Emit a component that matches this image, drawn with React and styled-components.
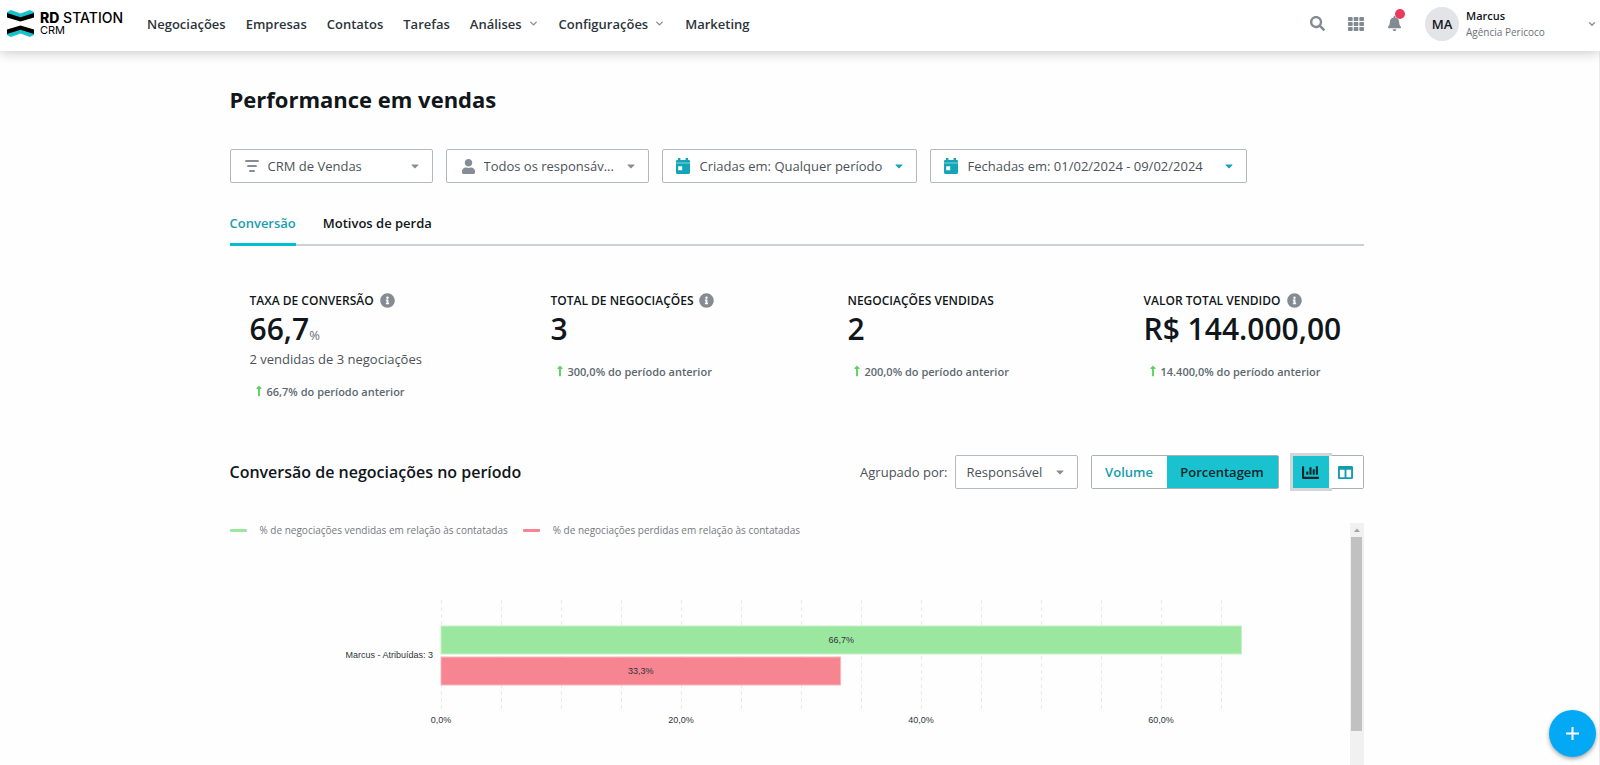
import React from "react";
import styled, { createGlobalStyle } from "styled-components";
import {
  FaSearch,
  FaTh,
  FaBell,
  FaUser,
  FaCaretDown,
  FaInfoCircle,
  FaLongArrowAltUp,
  FaChartBar,
  FaColumns,
} from "react-icons/fa";
import { FiChevronDown } from "react-icons/fi";

const GlobalStyle = createGlobalStyle`
  *, *::before, *::after { box-sizing: border-box; }
  body {
    margin: 0;
    background: #fefefe;
    color: #10161a;
    font-family: "Open Sans", "Noto Sans", sans-serif;
    font-size: 13px;
  }
  button, select { font: inherit; color: inherit; }
  h1, h2, p, dl, dd, dt { margin: 0; }
`;

const Shell = styled.div`
  display: flex;
  flex-direction: column;
  height: 100vh;
  overflow: hidden;
`;

const Header = styled.header`
  display: flex;
  align-items: center;
  flex: none;
  height: 51px;
  padding: 0 3px 4px 7px;
  background: #fff;
  box-shadow: 0 1px 12px rgba(0, 0, 0, 0.24);
  z-index: 1;
`;

const LogoLink = styled.a`
  display: flex;
  align-items: center;
  gap: 6px;
  width: 140px;
  color: #000;
  text-decoration: none;
  font-family: Inter, sans-serif;
`;

const LogoWords = styled.span`
  display: flex;
  flex-direction: column;
`;

const LogoName = styled.span`
  font-size: 14px;
  line-height: 12px;
  font-weight: 500;
  white-space: nowrap;

  b {
    font-weight: 800;
  }
`;

const LogoProduct = styled.span`
  font-size: 11px;
  line-height: 12px;
`;

const Nav = styled.nav`
  display: flex;
  align-items: center;
  gap: 20px;
  flex: 1;
`;

const NavLink = styled.a`
  display: flex;
  align-items: center;
  gap: 6px;
  color: #2d353b;
  font-weight: 600;
  text-decoration: none;
  white-space: nowrap;

  svg {
    color: #858e96;
  }
`;

const Tools = styled.div`
  display: flex;
  align-items: center;
  gap: 23px;
`;

const IconButton = styled.button`
  position: relative;
  display: flex;
  padding: 0;
  border: 0;
  background: none;
  color: #828a92;
`;

const Badge = styled.span`
  position: absolute;
  top: -7px;
  right: -3px;
  width: 10px;
  height: 10px;
  border-radius: 50%;
  background: #e73c5e;
`;

const Account = styled.button`
  display: flex;
  align-items: center;
  gap: 7px;
  width: 172px;
  padding: 0;
  border: 0;
  background: none;
  text-align: left;

  > svg {
    margin-left: auto;
    color: #858e96;
  }
`;

const Avatar = styled.span`
  display: grid;
  place-items: center;
  width: 34px;
  height: 34px;
  border-radius: 50%;
  background: #e3e4e8;
  font-size: 13px;
  font-weight: 600;
`;

const Person = styled.span`
  display: flex;
  flex-direction: column;
  font-size: 11px;
  line-height: 16px;
  font-weight: 600;

  small {
    color: #6a7177;
    font-size: 10px;
    font-weight: 400;
  }
`;

const Main = styled.main`
  display: flex;
  flex-direction: column;
  flex: 1;
  width: 100%;
  min-height: 0;
  padding-right: 6px;
  border-right: 1px solid #ececec;
`;

const Content = styled.div`
  display: flex;
  flex-direction: column;
  flex: 1;
  width: 100%;
  min-height: 0;
  max-width: 1134px;
  margin: 0 auto;
`;

const Title = styled.h1`
  padding: 33px 0 35px;
  font-size: 22px;
  line-height: 30px;
  font-weight: 700;
`;

const Filters = styled.div`
  display: flex;
  gap: 13px;
  height: 34px;
`;

const Field = styled.label`
  position: relative;
  display: flex;
  align-items: center;
  width: ${(p) => p.$width}px;
  height: 34px;
  border: 1px solid #b4b9be;
  border-radius: 2px;
  background: #fff;
  color: #858e96;

  > svg {
    position: absolute;
    pointer-events: none;
  }
  > svg:first-child {
    left: 14px;
  }
  > svg:last-child {
    right: 11px;
  }
`;

const Select = styled.select`
  width: 100%;
  height: 100%;
  padding: 0 0 0 ${(p) => p.$inset}px;
  border: 0;
  background: none;
  appearance: none;
  color: #4b5258;
`;

const DateButton = styled.button`
  display: flex;
  align-items: center;
  gap: 10px;
  width: ${(p) => p.$width}px;
  padding: 0 11px 0 13px;
  border: 1px solid #b4b9be;
  border-radius: 2px;
  background: #fff;
  color: #4b5258;
  white-space: nowrap;

  svg {
    color: #12a5b7;
  }
  svg:last-child {
    margin-left: auto;
  }
`;

const Tabs = styled.div`
  display: flex;
  gap: 27px;
  margin-top: 23px;
  height: 40px;
  border-bottom: 2px solid #cdd1d4;
`;

const Tab = styled.button`
  height: 40px;
  padding: 0 0 3px;
  border: 0;
  border-bottom: 3px solid ${(p) => (p.$active ? "#00bfcc" : "transparent")};
  background: none;
  color: ${(p) => (p.$active ? "#1a9fb0" : "#10161a")};
  font-weight: 600;
`;

const Stats = styled.dl`
  display: grid;
  grid-template-columns: 301fr 297fr 296fr 200fr;
  height: 164px;
  margin-top: 45px;
  padding: 0 20px;
`;

const StatLabel = styled.dt`
  display: flex;
  align-items: center;
  gap: 6px;
  height: 18px;
  font-size: 12px;
  font-weight: 600;
  white-space: nowrap;

  svg {
    color: #858b93;
  }
`;

const StatValue = styled.dd`
  height: 40px;
  font-size: 30px;
  line-height: 40px;
  font-weight: 600;
  white-space: nowrap;

  small {
    color: #6a7177;
    font-size: 13px;
    font-weight: 400;
  }
`;

const StatNote = styled.dd`
  height: 20px;
  color: #4b5258;
  line-height: 20px;
`;

const StatDelta = styled.dd`
  display: flex;
  align-items: center;
  gap: 2px;
  height: 16px;
  margin: 14px 0 0 3px;
  color: #5c6870;
  font-size: 11px;
  font-weight: 600;
  white-space: nowrap;

  svg {
    color: #58d35d;
  }
`;

const Section = styled.div`
  display: flex;
  align-items: center;
  height: 34px;

  h2 {
    flex: 1;
    font-size: 16px;
    font-weight: 600;
  }
`;

const GroupLabel = styled.label`
  margin-right: 7px;
  color: #4b5258;
`;

const Toggle = styled.div`
  display: flex;
  height: 34px;
  margin-left: 13px;
  border: 1px solid #a9b0b6;
  border-radius: 2px;
  background: #fff;
`;

const ToggleButton = styled.button`
  display: grid;
  place-items: center;
  width: ${(p) => p.$width}px;
  padding: 0;
  border: 0;
  background: ${(p) => (p.$active ? "#1ac1cf" : "#fff")};
  box-shadow: ${(p) => (p.$focus ? "0 0 0 3px #d2d6d9" : "none")};
  color: ${(p) => (p.$active ? "#10272c" : "#119db0")};
  font-weight: 600;
`;

const ChartPanel = styled.div`
  display: flex;
  flex: 1;
  min-height: 0;
  margin-top: 34px;
`;

const ChartBody = styled.div`
  flex: 1;
  min-width: 0;
  overflow: hidden;
`;

const Legend = styled.ul`
  display: flex;
  gap: 15px;
  height: 14px;
  margin: 0;
  padding: 0;
  list-style: none;
`;

const LegendItem = styled.li`
  display: flex;
  align-items: center;
  gap: 13px;
  color: #74797e;
  font-size: 10px;
  line-height: 14px;

  &::before {
    content: "";
    width: 17px;
    height: 3px;
    border-radius: 1px;
    background: ${(p) => p.$color};
  }
`;

const Chart = styled.svg`
  display: block;
  width: 100%;
  margin-top: 50px;

  text {
    fill: #30353a;
    font-family: "Liberation Sans", Arial, sans-serif;
    font-size: 9px;
  }
`;

const Track = styled.div`
  display: flex;
  flex-direction: column;
  align-items: center;
  width: 14px;
  background: #f1f1f1;

  svg {
    flex: none;
  }
`;

const Thumb = styled.div`
  width: 11px;
  height: 80%;
  background: #c1c1c1;
`;

const AddButton = styled.button`
  position: fixed;
  right: 4px;
  bottom: 8px;
  z-index: 2;
  display: grid;
  place-items: center;
  width: 47px;
  height: 47px;
  padding: 0;
  border: 0;
  border-radius: 50%;
  background: #03a9f4;
  box-shadow: 0 2px 4px rgba(0, 0, 0, 0.35);
  color: #fff;
`;

const LogoMark = () => (
  <svg width="27" height="27" viewBox="0 0 27 27" aria-hidden="true">
    <path d="M0 2 4 0 13.5 3.5 23 0 27 2V5L13.5 9.5 0 5Z" fill="#19c1ce" />
    <path d="M0 3 13.5 7.2 27 3V7.4L13.5 11.6 0 7.4Z" fill="#000" />
    <path d="M0 25 4 27 13.5 23.5 23 27 27 25V22L13.5 17.5 0 22Z" fill="#19c1ce" />
    <path d="M0 24 13.5 19.8 27 24V19.6L13.5 15.4 0 19.6Z" fill="#000" />
  </svg>
);

const FilterIcon = () => (
  <svg width="14" height="12" viewBox="0 0 14 12" fill="currentColor" aria-hidden="true">
    <rect width="14" height="2" rx="1" />
    <rect x="2" y="5" width="10" height="2" rx="1" />
    <rect x="4" y="10" width="6" height="2" rx="1" />
  </svg>
);

const CalendarIcon = () => (
  <svg width="14" height="16" viewBox="0 0 14 16" fill="currentColor" aria-hidden="true">
    <path d="M2 0h2.4v2H9.6V0H12v2h.8Q14 2 14 3.2V4.4H0V3.2Q0 2 1.2 2H2Z" />
    <path d="M0 4h14v2H0Z" opacity="0.5" />
    <path
      fillRule="evenodd"
      d="M0 5.4h14v9.2Q14 16 12.6 16H1.4Q0 16 0 14.6ZM2.2 8.2v4h4v-4Z"
    />
  </svg>
);

const stats = [
  { label: "TAXA DE CONVERSÃO", info: true, value: "66,7", unit: "%", note: "2 vendidas de 3 negociações", delta: "66,7% do período anterior" },
  { label: "TOTAL DE NEGOCIAÇÕES", info: true, value: "3", delta: "300,0% do período anterior" },
  { label: "NEGOCIAÇÕES VENDIDAS", value: "2", delta: "200,0% do período anterior" },
  { label: "VALOR TOTAL VENDIDO", info: true, value: "R$ 144.000,00", delta: "14.400,0% do período anterior" },
];

const ORIGIN = 211;
const PER_POINT = 12;
const bars = [
  { value: 66.7, text: "66,7%", color: "#9be79f", edge: "#c4f2c6", y: 39 },
  { value: 33.3, text: "33,3%", color: "#f68591", edge: "#fbb5bd", y: 70 },
];

const ConversionChart = () => (
  <Chart viewBox="0 0 1120 190" role="img" aria-label="Conversão por responsável">
    {Array.from({ length: 14 }, (_, i) => (
      <line
        key={i}
        x1={ORIGIN + i * 5 * PER_POINT}
        x2={ORIGIN + i * 5 * PER_POINT}
        y1="13"
        y2="123"
        stroke="#e9e9e9"
        strokeDasharray="4 3"
        shapeRendering="crispEdges"
      />
    ))}
    {bars.map((b) => (
      <g key={b.text}>
        <rect x={ORIGIN} y={b.y} width={b.value * PER_POINT} height="28" fill={b.color} stroke={b.edge} />
        <text x={ORIGIN + (b.value * PER_POINT) / 2} y={b.y + 17} textAnchor="middle">
          {b.text}
        </text>
      </g>
    ))}
    <text x={ORIGIN - 8} y="71" textAnchor="end">
      Marcus - Atribuídas: 3
    </text>
    {[0, 20, 40, 60].map((v) => (
      <text key={v} x={ORIGIN + v * PER_POINT} y="136" textAnchor="middle">
        {v},0%
      </text>
    ))}
  </Chart>
);

export default function App() {
  return (
    <Shell>
      <GlobalStyle />
      <Header>
        <LogoLink href="#">
          <LogoMark />
          <LogoWords>
            <LogoName>
              <b>RD</b> STATION
            </LogoName>
            <LogoProduct>CRM</LogoProduct>
          </LogoWords>
        </LogoLink>
        <Nav>
          <NavLink href="#">Negociações</NavLink>
          <NavLink href="#">Empresas</NavLink>
          <NavLink href="#">Contatos</NavLink>
          <NavLink href="#">Tarefas</NavLink>
          <NavLink href="#">
            Análises <FiChevronDown size={11} strokeWidth={3} />
          </NavLink>
          <NavLink href="#">
            Configurações <FiChevronDown size={11} strokeWidth={3} />
          </NavLink>
          <NavLink href="#">Marketing</NavLink>
        </Nav>
        <Tools>
          <IconButton aria-label="Buscar">
            <FaSearch size={15} />
          </IconButton>
          <IconButton aria-label="Aplicativos">
            <FaTh size={16} />
          </IconButton>
          <IconButton aria-label="Notificações">
            <FaBell size={15} />
            <Badge />
          </IconButton>
          <Account>
            <Avatar>MA</Avatar>
            <Person>
              Marcus
              <small>Agência Pericoco</small>
            </Person>
            <FiChevronDown size={10} strokeWidth={3} />
          </Account>
        </Tools>
      </Header>

      <Main>
        <Content>
          <Title>Performance em vendas</Title>
          <Filters>
            <Field $width={203}>
              <FilterIcon />
              <Select $inset={37} aria-label="Funil">
                <option>CRM de Vendas</option>
              </Select>
              <FaCaretDown size={12} />
            </Field>
            <Field $width={203}>
              <FaUser size={15} />
              <Select $inset={37} aria-label="Responsáveis">
                <option>Todos os responsáv...</option>
              </Select>
              <FaCaretDown size={12} />
            </Field>
            <DateButton $width={255}>
              <CalendarIcon />
              Criadas em: Qualquer período
              <FaCaretDown size={12} />
            </DateButton>
            <DateButton $width={317}>
              <CalendarIcon />
              Fechadas em: 01/02/2024 - 09/02/2024
              <FaCaretDown size={12} />
            </DateButton>
          </Filters>

          <Tabs role="tablist">
            <Tab role="tab" aria-selected="true" $active>
              Conversão
            </Tab>
            <Tab role="tab" aria-selected="false">
              Motivos de perda
            </Tab>
          </Tabs>

          <Stats>
            {stats.map((s) => (
              <div key={s.label}>
                <StatLabel>
                  {s.label}
                  {s.info && <FaInfoCircle size={15} />}
                </StatLabel>
                <StatValue>
                  {s.value}
                  {s.unit && <small>{s.unit}</small>}
                </StatValue>
                {s.note && <StatNote>{s.note}</StatNote>}
                <StatDelta>
                  <FaLongArrowAltUp size={12} />
                  {s.delta}
                </StatDelta>
              </div>
            ))}
          </Stats>

          <Section>
            <h2>Conversão de negociações no período</h2>
            <GroupLabel htmlFor="group">Agrupado por:</GroupLabel>
            <Field as="div" $width={123}>
              <Select id="group" $inset={11}>
                <option>Responsável</option>
              </Select>
              <FaCaretDown size={12} />
            </Field>
            <Toggle>
              <ToggleButton $width={75}>Volume</ToggleButton>
              <ToggleButton $width={111} $active>
                Porcentagem
              </ToggleButton>
            </Toggle>
            <Toggle>
              <ToggleButton $width={36} $active $focus aria-label="Gráfico">
                <FaChartBar size={17} />
              </ToggleButton>
              <ToggleButton $width={34} aria-label="Tabela">
                <FaColumns size={15} />
              </ToggleButton>
            </Toggle>
          </Section>

          <ChartPanel>
            <ChartBody>
              <Legend>
                <LegendItem $color="#9be79f">% de negociações vendidas em relação às contatadas</LegendItem>
                <LegendItem $color="#f68591">% de negociações perdidas em relação às contatadas</LegendItem>
              </Legend>
              <ConversionChart />
            </ChartBody>
            <Track>
              <svg width="14" height="14" aria-hidden="true">
                <path d="M4 9 7 5.5 10 9Z" fill="#a3a3a3" />
              </svg>
              <Thumb />
            </Track>
          </ChartPanel>
        </Content>
      </Main>

      <AddButton aria-label="Adicionar">
        <svg width="13" height="13" stroke="#fff" strokeWidth="2" aria-hidden="true">
          <path d="M6.5 0V13M0 6.5H13" />
        </svg>
      </AddButton>
    </Shell>
  );
}
